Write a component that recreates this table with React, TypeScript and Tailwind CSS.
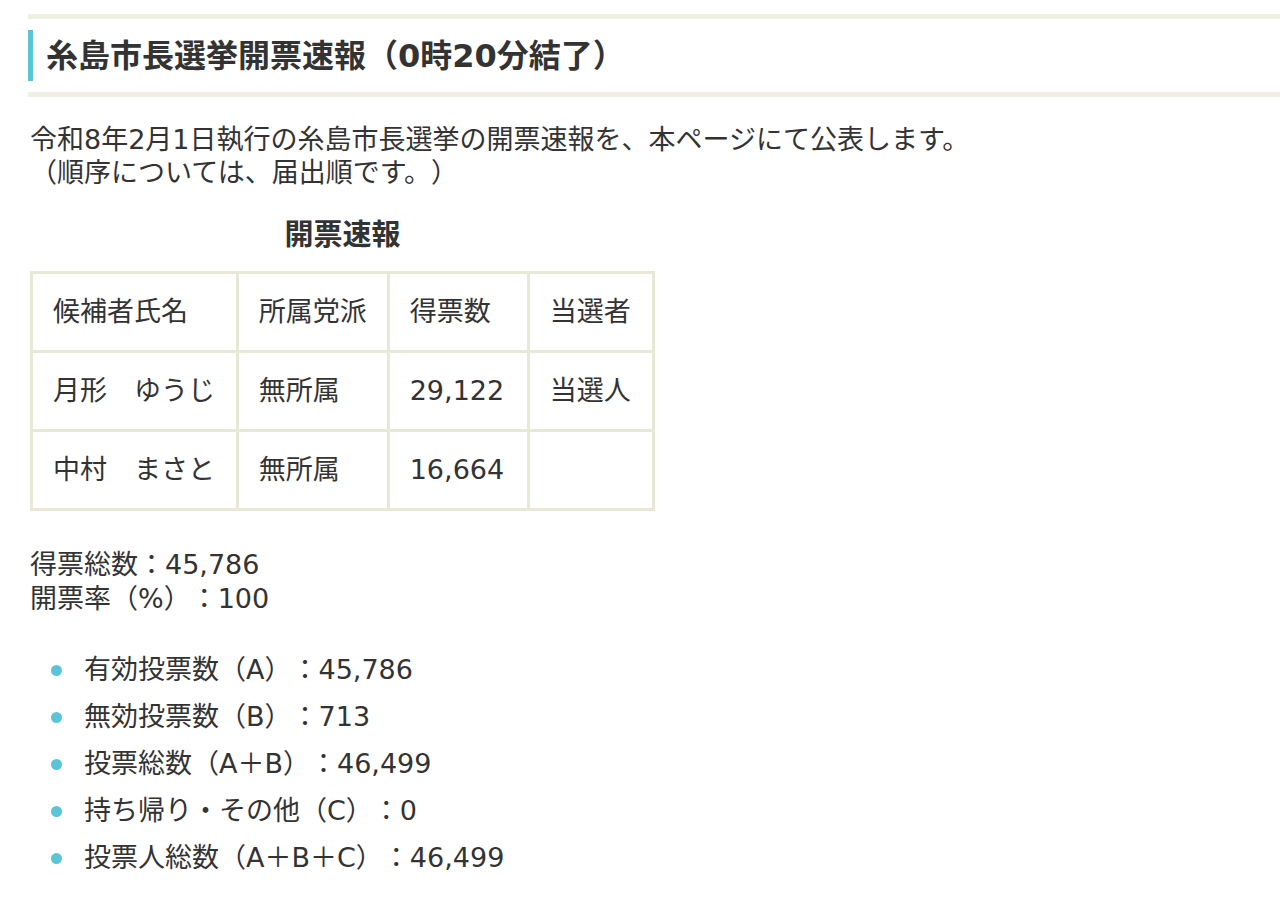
export default function App() {
  const rows = [
    { name: "月形　ゆうじ", party: "無所属", votes: "29,122", result: "当選人" },
    { name: "中村　まさと", party: "無所属", votes: "16,664", result: "" },
  ];
  const stats = [
    "有効投票数（A）：45,786",
    "無効投票数（B）：713",
    "投票総数（A＋B）：46,499",
    "持ち帰り・その他（C）：0",
    "投票人総数（A＋B＋C）：46,499",
  ];
  const cell = "border-[3px] border-[#e8e8d6] px-[20px] h-[79px] align-middle font-normal text-left";

  return (
    <div
      className="min-h-screen bg-white text-[#333] pl-[28px] pt-[14px] overflow-hidden [text-spacing-trim:space-all]"
      style={{ fontFamily: '"DejaVu Sans", "Noto Sans CJK JP", sans-serif' }}
    >
      {/* Title */}
      <div className="border-y-[5px] border-[#efefe3] py-[11px]">
        <h1 className="border-l-[5px] border-[#5bc5d8] pl-[13px] h-[51px] flex items-center text-[32px] font-bold leading-none">
          糸島市長選挙開票速報（0時20分結了）
        </h1>
      </div>

      <p className="mt-[26px] text-[27px] leading-[33px] pl-[2px]">
        令和8年2月1日執行の糸島市長選挙の開票速報を、本ページにて公表します。
        <br />
        （順序については、届出順です。）
      </p>

      {/* Table */}
      <table className="mt-[32px] ml-[2px] border-collapse text-[27px] w-[625px]">
        <caption className="font-bold text-[29px] leading-none pb-[21px]">開票速報</caption>
        <thead>
          <tr>
            <th className={`${cell} w-[207px]`}>候補者氏名</th>
            <th className={`${cell} w-[152px]`}>所属党派</th>
            <th className={`${cell} w-[140px]`}>得票数</th>
            <th className={`${cell} w-[126px]`}>当選者</th>
          </tr>
        </thead>
        <tbody>
          {rows.map((r) => (
            <tr key={r.name}>
              <td className={cell}>{r.name}</td>
              <td className={cell}>{r.party}</td>
              <td className={cell}>{r.votes}</td>
              <td className={cell}>{r.result}</td>
            </tr>
          ))}
        </tbody>
      </table>

      <div className="mt-[37px] pl-[2px] text-[27px] leading-[34px]">
        <div>得票総数：45,786</div>
        <div>開票率（%）：100</div>
      </div>

      <ul className="mt-[31px] text-[27px]">
        {stats.map((s) => (
          <li key={s} className="flex items-center h-[47px]">
            <span className="w-[11px] h-[11px] rounded-full bg-[#5bc5d8] ml-[23px] mr-[22px] shrink-0" />
            <span>{s}</span>
          </li>
        ))}
      </ul>
    </div>
  );
}
